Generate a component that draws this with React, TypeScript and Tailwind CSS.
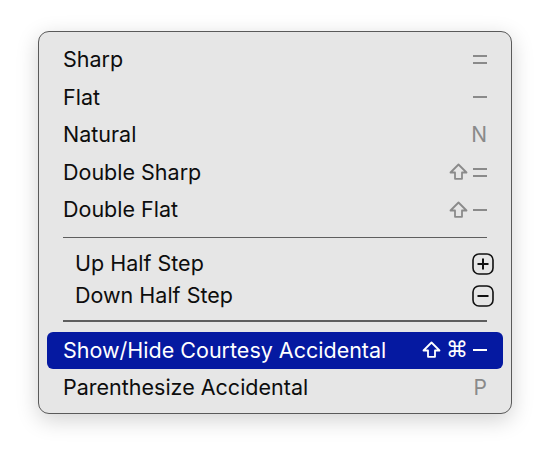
import React from 'react';

type Key = 'shift' | 'cmd' | 'eq' | 'minus' | 'plusBox' | 'minusBox' | string;

interface MenuItem {
  label: string;
  keys: Key[];
  active?: boolean;
  indent?: boolean;
}

const ShiftIcon: React.FC<{ color: string }> = ({ color }) => (
  <svg width="19" height="18" viewBox="0 0 19 18" fill="none">
    <path
      d="M9.5 1.5 L17.5 9.5 H13 V15.8 H6 V9.5 H1.5 Z"
      stroke={color}
      strokeWidth="1.8"
      strokeLinejoin="round"
    />
  </svg>
);

const BoxIcon: React.FC<{ plus?: boolean }> = ({ plus }) => (
  <svg width="22" height="22" viewBox="0 0 22 22" fill="none">
    <rect x="1" y="1" width="20" height="20" rx="6" stroke="#111111" strokeWidth="1.6" />
    <path d="M5.5 11 H16.5" stroke="#111111" strokeWidth="2" />
    {plus && <path d="M11 5.5 V16.5" stroke="#111111" strokeWidth="2" />}
  </svg>
);

const KeyGlyph: React.FC<{ k: Key; active?: boolean }> = ({ k, active }) => {
  const color = active ? '#ffffff' : '#8a8a8a';
  if (k === 'shift') return <ShiftIcon color={color} />;
  if (k === 'plusBox') return <BoxIcon plus />;
  if (k === 'minusBox') return <BoxIcon />;
  if (k === 'cmd')
    return (
      <span className={`text-[22px] leading-none font-['DejaVu_Sans',sans-serif] ${active ? 'text-white' : 'text-[#8a8a8a]'}`}>⌘</span>
    );
  if (k === 'eq')
    return (
      <span className="flex h-[9px] w-[14px] flex-col justify-between">
        <span className={`h-[2px] w-full ${active ? 'bg-white' : 'bg-[#8a8a8a]'}`} />
        <span className={`h-[2px] w-full ${active ? 'bg-white' : 'bg-[#8a8a8a]'}`} />
      </span>
    );
  if (k === 'minus')
    return <span className={`h-[2px] w-[14px] ${active ? 'bg-white' : 'bg-[#8a8a8a]'}`} />;
  return <span className={`text-[21px] ${active ? 'text-white' : 'text-[#8a8a8a]'}`}>{k}</span>;
};

const Row: React.FC<{ item: MenuItem; tall?: boolean }> = ({ item, tall = true }) => (
  <div
    className={`mx-[8px] flex items-center justify-between rounded-[6px] px-[16px] ${
      tall ? 'h-[37.5px]' : 'h-[32px]'
    } ${item.active ? 'bg-[#0519a1] text-white' : 'text-[#0d0d0d]'}`}
  >
    <span className={`text-[21.5px] leading-none ${item.indent ? 'pl-[12px]' : ''}`}>{item.label}</span>
    <span className={`flex items-center gap-[5px] ${item.indent ? '-mr-[7px]' : ''}`}>
      {item.keys.map((k, i) => (
        <KeyGlyph key={i} k={k} active={item.active} />
      ))}
    </span>
  </div>
);

const Separator = () => <div className="mx-[24px] h-[1.5px] bg-[#5e5e5e]" />;

const group1: MenuItem[] = [
  { label: 'Sharp', keys: ['eq'] },
  { label: 'Flat', keys: ['minus'] },
  { label: 'Natural', keys: ['N'] },
  { label: 'Double Sharp', keys: ['shift', 'eq'] },
  { label: 'Double Flat', keys: ['shift', 'minus'] },
];

const group2: MenuItem[] = [
  { label: 'Up Half Step', keys: ['plusBox'], indent: true },
  { label: 'Down Half Step', keys: ['minusBox'], indent: true },
];

const group3: MenuItem[] = [
  { label: 'Show/Hide Courtesy Accidental', keys: ['shift', 'cmd', 'minus'], active: true },
  { label: 'Parenthesize Accidental', keys: ['P'] },
];

export default function App() {
  return (
    <div className="h-[460px] w-[550px] bg-white pl-[38px] pt-[31px] font-['Inter',sans-serif]">
      <div className="h-[383px] w-[474px] rounded-[11px] border border-[#5a5a5a] bg-[#e6e6e6] pt-[9px] shadow-[0_6px_22px_rgba(0,0,0,0.18)]">
        {group1.map(item => (
          <Row key={item.label} item={item} />
        ))}
        <div className="mt-[8px]" />
        <Separator />
        <div className="mt-[10px]" />
        {group2.map(item => (
          <Row key={item.label} item={item} tall={false} />
        ))}
        <div className="mt-[8px]" />
        <Separator />
        <div className="mt-[10px]" />
        {group3.map(item => (
          <Row key={item.label} item={item} />
        ))}
      </div>
    </div>
  );
}
